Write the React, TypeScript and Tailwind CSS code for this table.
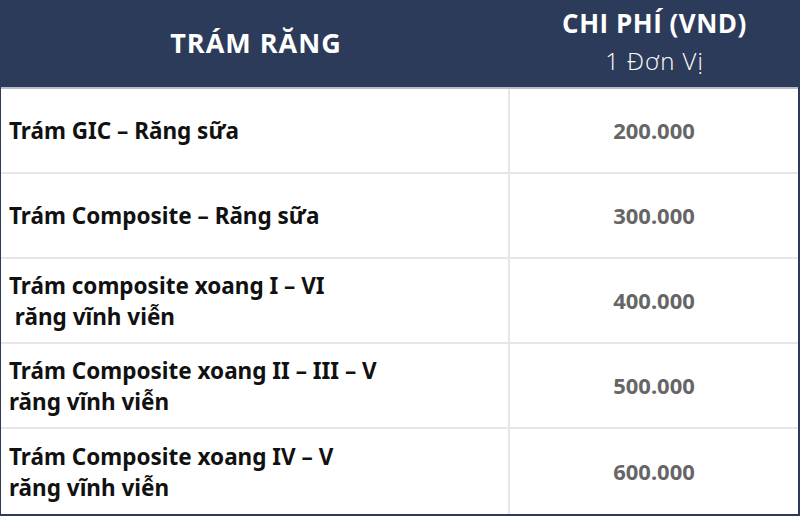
const rows = [
  { name: ['Trám GIC – Răng sữa'], price: '200.000' },
  { name: ['Trám Composite – Răng sữa'], price: '300.000' },
  { name: ['Trám composite xoang I – VI', '\u00a0răng vĩnh viễn'], price: '400.000' },
  { name: ['Trám Composite xoang II – III – V', 'răng vĩnh viễn'], price: '500.000' },
  { name: ['Trám Composite xoang IV – V', 'răng vĩnh viễn'], price: '600.000' },
];

export default function App() {
  return (
    <div className="w-[800px] h-[516px] bg-white font-['Noto_Sans',sans-serif]">
      <div className="w-[800px] border-l border-r-2 border-b-2 border-[#2c3b59]">
        <div className="flex h-[89px] bg-[#2c3b59] text-white border-b-2 border-[#b9bec6]">
          <div className="w-[510px] flex items-center justify-center font-['Open_Sans',sans-serif] font-bold text-[27px] tracking-[1px]">
            TRÁM RĂNG
          </div>
          <div className="flex-1 flex flex-col items-center justify-center font-['Open_Sans',sans-serif] leading-[38px] -mt-[4px]">
            <div className="font-bold text-[26px] tracking-[0.5px]">CHI PHÍ (VND)</div>
            <div className="font-light text-[24px] tracking-[1px]">1 Đơn Vị</div>
          </div>
        </div>
        {rows.map((r, i) => (
          <div
            key={i}
            className={`flex h-[85px] ${i < rows.length - 1 ? 'border-b-2 border-[#e6e6e6]' : ''}`}
          >
            <div className="w-[509px] flex flex-col justify-center pl-[8px] border-r-2 border-[#e6e6e6] text-[#111] font-bold text-[22.5px] leading-[31px] whitespace-pre">
              {r.name.map((l, j) => (
                <div key={j}>{l}</div>
              ))}
            </div>
            <div className="flex-1 flex items-center justify-center text-[#666] font-bold text-[22px]">
              {r.price}
            </div>
          </div>
        ))}
      </div>
    </div>
  );
}
